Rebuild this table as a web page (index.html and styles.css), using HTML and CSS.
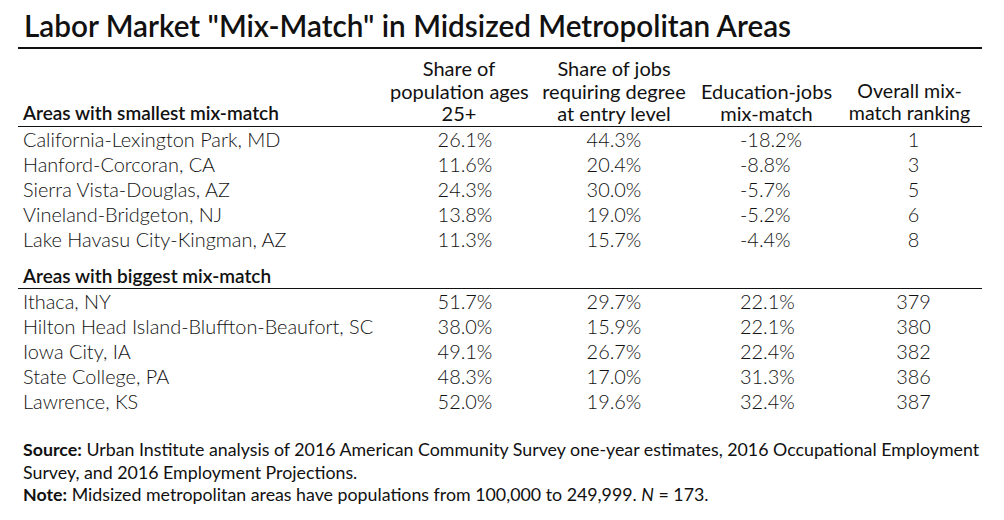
FILE: index.html
```html
<!DOCTYPE html>
<html>
<head>
<meta charset="utf-8">
<link rel="stylesheet" href="styles.css">
</head>
<body>
<div class="page">
  <h1 class="title">Labor Market "Mix-Match" in Midsized Metropolitan Areas</h1>
  <table class="data">
    <colgroup>
      <col class="c-name"><col class="c-1"><col class="c-2"><col class="c-3"><col class="c-4">
    </colgroup>
    <thead>
      <tr class="head">
        <th class="group">Areas with smallest mix-match</th>
        <th class="h-1">Share of<br>population ages<br>25+</th>
        <th>Share of jobs<br>requiring degree<br>at entry level</th>
        <th>Education-jobs<br>mix-match</th>
        <th class="h-4">Overall mix-<br>match ranking</th>
      </tr>
    </thead>
    <tbody>
      <tr><td>California-Lexington Park, MD</td><td>26.1%</td><td>44.3%</td><td class="mm">-18.2%</td><td>1</td></tr>
      <tr><td>Hanford-Corcoran, CA</td><td>11.6%</td><td>20.4%</td><td class="mm">-8.8%</td><td>3</td></tr>
      <tr><td>Sierra Vista-Douglas, AZ</td><td>24.3%</td><td>30.0%</td><td class="mm">-5.7%</td><td>5</td></tr>
      <tr><td>Vineland-Bridgeton, NJ</td><td>13.8%</td><td>19.0%</td><td class="mm">-5.2%</td><td>6</td></tr>
      <tr><td>Lake Havasu City-Kingman, AZ</td><td>11.3%</td><td>15.7%</td><td class="mm">-4.4%</td><td>8</td></tr>
      <tr class="subhead"><th class="group">Areas with biggest mix-match</th><th></th><th></th><th></th><th></th></tr>
      <tr><td>Ithaca, NY</td><td>51.7%</td><td>29.7%</td><td class="mm">22.1%</td><td>379</td></tr>
      <tr><td>Hilton Head Island-Bluffton-Beaufort, SC</td><td>38.0%</td><td>15.9%</td><td class="mm">22.1%</td><td>380</td></tr>
      <tr><td>Iowa City, IA</td><td>49.1%</td><td>26.7%</td><td class="mm">22.4%</td><td>382</td></tr>
      <tr><td>State College, PA</td><td>48.3%</td><td>17.0%</td><td class="mm">31.3%</td><td>386</td></tr>
      <tr><td>Lawrence, KS</td><td>52.0%</td><td>19.6%</td><td class="mm">32.4%</td><td>387</td></tr>
    </tbody>
  </table>
  <div class="notes">
    <p><b>Source:</b> Urban Institute analysis of 2016 American Community Survey one-year estimates, 2016 Occupational Employment Survey, and 2016 Employment Projections.</p>
    <p><b>Note:</b> Midsized metropolitan areas have populations from 100,000 to 249,999. <i>N</i> = 173.</p>
  </div>
</div>
</body>
</html>
```

FILE: styles.css
```css
html, body {
  margin: 0;
  padding: 0;
  background: #ffffff;
}

body {
  font-family: Lato, "Liberation Sans", sans-serif;
  color: #111111;
}

.page {
  width: 964px;
  padding: 0 0 0 18px;
}

.title {
  margin: 0;
  padding: 10px 0 6px 6px;
  font-size: 29.7px;
  line-height: 31px;
  font-weight: 600;
  color: #111111;
  border-bottom: 2px solid #111111;
}

.data {
  width: 964px;
  border-collapse: collapse;
  table-layout: fixed;
}

.c-name { width: 372px; }
.c-1 { width: 150px; }
.c-2 { width: 148px; }
.c-3 { width: 157px; }
.c-4 { width: 137px; }

.data th {
  font-size: 20px;
  font-weight: 400;
  text-align: center;
  vertical-align: bottom;
  line-height: 22.5px;
  padding: 0;
  white-space: nowrap;
}

.head th {
  padding-top: 8px;
  padding-bottom: 1px;
  border-bottom: 1px solid #111111;
}

.head th.h-1 {
  padding-right: 12px;
}

.head th.h-4 {
  padding-right: 8px;
  font-size: 19.6px;
}

.data th.group {
  font-size: 19px;
  text-align: left;
  font-weight: 600;
  padding-left: 5px;
}

.subhead th {
  padding-top: 13px;
  padding-bottom: 1px;
  border-bottom: 1px solid #111111;
}

.data td {
  font-size: 19.9px;
  font-weight: 300;
  text-align: center;
  line-height: 25px;
  padding: 0;
}

.data td:first-child {
  text-align: left;
  padding-left: 5px;
}

.data td.mm {
  text-align: left;
  padding-left: 52px;
}

.notes {
  margin-top: 24px;
  padding-left: 5px;
  font-size: 17.8px;
  line-height: 22.5px;
  font-weight: 400;
  color: #111111;
}

.notes p {
  margin: 0;
}

.notes b {
  font-weight: 700;
}
```
